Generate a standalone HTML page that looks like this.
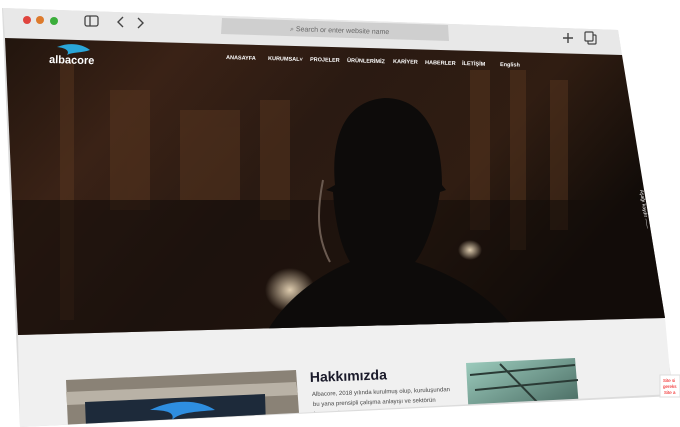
<!DOCTYPE html>
<html><head><meta charset="utf-8"><style>
html,body{margin:0;padding:0;background:#fff;width:680px;height:427px;overflow:hidden}
svg{display:block}
text{font-family:"Liberation Sans",sans-serif}
</style></head><body>
<svg width="680" height="427" viewBox="0 0 680 427" xmlns="http://www.w3.org/2000/svg">
<defs>
<linearGradient id="hero" x1="0" y1="0" x2="1" y2="0.4">
<stop offset="0" stop-color="#20140d"/>
<stop offset="0.25" stop-color="#3a2216"/>
<stop offset="0.5" stop-color="#2a1a12"/>
<stop offset="0.75" stop-color="#301d12"/>
<stop offset="1" stop-color="#100b08"/>
</linearGradient>
<radialGradient id="glow" cx="0.5" cy="0.5" r="0.5">
<stop offset="0" stop-color="#f3e0c0" stop-opacity="0.9"/>
<stop offset="1" stop-color="#f3e0c0" stop-opacity="0"/>
</radialGradient>
<clipPath id="hc"><polygon points="5,38 622,55 665,318 18,335"/></clipPath>
<clipPath id="cc"><polygon points="18,335 665,318 672,394 20,427"/></clipPath>
<linearGradient id="img2" x1="0" y1="0" x2="1" y2="1"><stop offset="0" stop-color="#9fcfc0"/><stop offset="1" stop-color="#3d5d55"/></linearGradient>
</defs>
<polygon points="2,8 618,30 674,396 20,427" fill="#dcdcdc"/>
<polygon points="3,8 618,30 622,55 5,38" fill="#e8e8e8"/>
<polygon points="18,335 665,318 672,394 20,427" fill="#f0f0f0"/>
<g clip-path="url(#hc)">
<rect x="0" y="30" width="680" height="310" fill="url(#hero)"/>
<g fill="#5e3a22" opacity="0.45">
<rect x="60" y="60" width="14" height="260"/><rect x="110" y="90" width="40" height="120"/>
<rect x="180" y="110" width="60" height="90"/><rect x="260" y="100" width="30" height="120"/>
<rect x="470" y="70" width="20" height="160"/><rect x="510" y="70" width="16" height="180"/>
<rect x="550" y="80" width="18" height="150"/>
</g>
<rect x="0" y="200" width="680" height="140" fill="#140d0a" opacity="0.6"/>
<ellipse cx="290" cy="290" rx="25" ry="22" fill="url(#glow)"/>
<ellipse cx="470" cy="250" rx="12" ry="10" fill="url(#glow)"/>
<path d="M335,185 C330,130 350,100 385,98 C420,98 442,128 442,185 L446,190 L440,192 C436,220 425,250 415,262 C455,275 500,300 520,340 L260,345 C280,300 320,275 350,262 C340,245 335,220 333,192 L326,190 Z" fill="#0d0b0a"/>
<path d="M323,180 C316,215 318,240 330,262" stroke="#6a5a50" stroke-width="2" fill="none"/>
</g>
<circle cx="27" cy="20" r="4" fill="#e0443e"/><circle cx="40" cy="20" r="4" fill="#dd7a2c"/><circle cx="54" cy="21" r="4" fill="#3aad3a"/>
<rect x="85" y="16" width="13" height="10" rx="2" fill="none" stroke="#444" stroke-width="1.3"/><line x1="90" y1="16" x2="90" y2="26" stroke="#444" stroke-width="1.3"/>
<path d="M123,17 L118,22 L123,27" stroke="#444" stroke-width="1.4" fill="none"/>
<path d="M138,18 L143,23 L138,28" stroke="#444" stroke-width="1.4" fill="none"/>
<polygon points="222,18 448,25 449,41 221,34" fill="#cfcfcf"/>
<text x="290" y="31" font-size="7" fill="#666" transform="rotate(1.8 290 31)">⌕ Search or enter website name</text>
<path d="M568,33 v10 M563,38 h10" stroke="#444" stroke-width="1.4"/>
<rect x="588" y="35" width="8" height="9" rx="1" fill="none" stroke="#444" stroke-width="1.2"/><rect x="585" y="32" width="8" height="9" rx="1" fill="#e8e8e8" stroke="#444" stroke-width="1.2"/>
<path d="M57,47 C70,42 82,44 90,50 C82,53 72,52 67,55 C70,51 66,48 57,47 Z" fill="#2aa6d8"/>
<text x="49" y="63" font-size="11" font-weight="bold" fill="#fff" transform="rotate(1.5 49 63)">albacore</text>
<g font-size="5.5" font-weight="bold" fill="#fff">
<text x="226" y="59" transform="rotate(1.8 226 59)">ANASAYFA</text>
<text x="268" y="60" transform="rotate(1.8 268 60)">KURUMSAL˅</text>
<text x="310" y="61" transform="rotate(1.8 310 61)">PROJELER</text>
<text x="347" y="62" transform="rotate(1.8 347 62)">ÜRÜNLERİMİZ</text>
<text x="393" y="63" transform="rotate(1.8 393 63)">KARİYER</text>
<text x="425" y="64" transform="rotate(1.8 425 64)">HABERLER</text>
<text x="462" y="65" transform="rotate(1.8 462 65)">İLETİŞİM</text>
<text x="500" y="66" transform="rotate(1.8 500 66)">English</text>
</g>
<text x="640" y="190" font-size="5" fill="#fff" transform="rotate(81 640 190)">Aşağı kaydır ——</text>
<g clip-path="url(#cc)">
<polygon points="66,380 296,370 300,427 68,427" fill="#8a8276"/>
<polygon points="66,392 296,382 298,395 67,405" fill="#b9b2a6"/>
<polygon points="85,402 265,394 266,427 86,427" fill="#1d2a3a"/>
<path d="M150,410 C175,398 200,400 215,410 C195,412 180,412 172,420 C175,413 168,410 150,410 Z" fill="#2e8ee0"/>
<text x="310" y="382" font-size="14" font-weight="bold" fill="#1a1a2a" transform="rotate(-2 310 382)">Hakkımızda</text>
<g font-size="6" fill="#444">
<text x="312" y="396" transform="rotate(-2 312 396)">Albacore, 2018 yılında kurulmuş olup, kuruluşundan</text>
<text x="313" y="406" transform="rotate(-2 313 406)">bu yana prensipli çalışma anlayışı ve sektörün</text>
<text x="314" y="416" transform="rotate(-2 314 416)">başarısıyla göstergeli özen sayesinde</text>
</g>
<polygon points="466,363 575,358 580,420 469,420" fill="url(#img2)"/>
<path d="M470,375 L575,365 M475,390 L578,380 M500,364 L540,405" stroke="#2a3a35" stroke-width="2"/>
</g>
<rect x="660" y="375" width="20" height="22" fill="#fff" stroke="#ddd"/>
<text x="663" y="382" font-size="4.5" fill="#e00">Site si</text><text x="663" y="388" font-size="4.5" fill="#e00">gereks</text><text x="664" y="394" font-size="4.5" fill="#e00">Site a</text>
</svg>
</body></html>
